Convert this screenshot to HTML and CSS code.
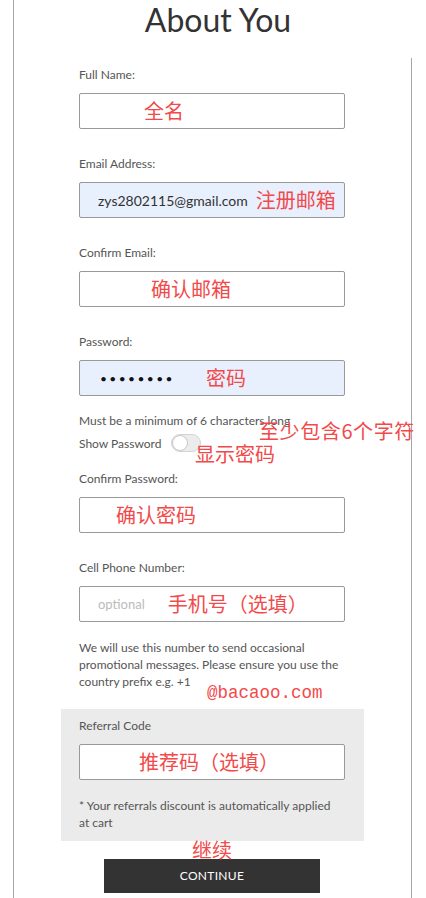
FILE: index.html
```html
<!DOCTYPE html>
<html lang="en">
<head>
    <meta charset="UTF-8">
    <meta name="viewport" content="width=device-width, initial-scale=1.0">
    <title>About You</title>
    <link rel="stylesheet" href="styles.css">
</head>
<body>
    <div class="page">
        <h1 class="title">About You</h1>

        <form class="form" id="aboutForm">
            <div class="form-group">
                <label class="label">Full Name:</label>
                <div class="field">
                    <span class="note note-name">全名</span>
                </div>
            </div>

            <div class="form-group">
                <label class="label">Email Address:</label>
                <div class="field field-filled">
                    <span class="value">zys2802115@gmail.com</span>
                    <span class="note note-email">注册邮箱</span>
                </div>
            </div>

            <div class="form-group">
                <label class="label">Confirm Email:</label>
                <div class="field">
                    <span class="note note-confirm-email">确认邮箱</span>
                </div>
            </div>

            <div class="form-group form-group-password">
                <label class="label">Password:</label>
                <div class="field field-filled">
                    <span class="value dots">&bull;&bull;&bull;&bull;&bull;&bull;&bull;&bull;</span>
                    <span class="note note-password">密码</span>
                </div>
                <div class="hint-block">
                    <p class="hint">Must be a minimum of 6 characters long</p>
                    <div class="toggle-row">
                        <span>Show Password</span>
                        <span class="toggle"><span class="knob"></span></span>
                    </div>
                    <span class="note float-note note-min">至少包含6个字符</span>
                    <span class="note float-note note-show">显示密码</span>
                </div>
            </div>

            <div class="form-group">
                <label class="label">Confirm Password:</label>
                <div class="field">
                    <span class="note note-confirm-password">确认密码</span>
                </div>
            </div>

            <div class="form-group form-group-phone">
                <label class="label">Cell Phone Number:</label>
                <div class="field">
                    <span class="placeholder">optional</span>
                    <span class="note note-phone">手机号（选填）</span>
                </div>
                <div class="phone-info">
                    <p class="hint">We will use this number to send occasional promotional messages. Please ensure you use the country prefix e.g. +1</p>
                    <span class="note float-note note-site">@bacaoo.com</span>
                </div>
            </div>

            <div class="referral">
                <label class="label">Referral Code</label>
                <div class="field">
                    <span class="note note-referral">推荐码（选填）</span>
                </div>
                <p class="hint referral-hint">* Your referrals discount is automatically applied at cart</p>
            </div>

            <div class="actions">
                <span class="note float-note note-continue">继续</span>
                <button type="submit" class="btn">CONTINUE</button>
            </div>
        </form>
    </div>
</body>
</html>
```

FILE: styles.css
```css
body {
    font-family: Lato, 'Open Sans', Arial, sans-serif;
    margin: 0;
    padding: 0;
    background-color: #fff;
    color: #555;
}

.page {
    margin-left: 13px;
    width: 398px;
    min-height: 898px;
    border-left: 1px solid #a6a6a6;
}

.title {
    margin: 0;
    padding-left: 10px;
    font-size: 32px;
    font-weight: 400;
    line-height: 40px;
    color: #333;
    text-align: center;
}

.form {
    margin-top: 18px;
    padding: 9px 66px 5px 65px;
    border-right: 1px solid #a6a6a6;
    min-height: 826px;
    box-sizing: border-box;
}

.form-group {
    margin-bottom: 27px;
}

.label {
    display: block;
    font-size: 12px;
    line-height: 16px;
    margin-bottom: 10px;
    color: #555;
}

.field {
    display: flex;
    align-items: center;
    width: 266px;
    height: 36px;
    padding-left: 18px;
    border: 1px solid #999;
    border-radius: 2px;
    background: #fff;
    box-sizing: border-box;
    white-space: nowrap;
}

.field-filled {
    background: #e8f0fe;
}

.value {
    font-size: 14px;
    color: #333;
}

.dots {
    padding-left: 2px;
    font-size: 12px;
    letter-spacing: 2.4px;
    color: #111;
}

.placeholder {
    font-size: 13px;
    color: #bbb;
}

/* red annotations */
.note {
    font-family: 'Noto Sans CJK SC', 'Liberation Sans', sans-serif;
    font-size: 20px;
    line-height: 24px;
    color: #f24a4a;
}

.float-note {
    position: absolute;
    white-space: nowrap;
}

.note-name { margin-left: 46px; }
.note-email { margin-left: 8px; }
.note-confirm-email { margin-left: 53px; }
.note-password { margin-left: 31px; }
.note-confirm-password { margin-left: 18px; }
.note-phone { margin-left: 23px; }
.note-referral { margin-left: 41px; }

.hint {
    margin: 0;
    font-size: 12px;
    line-height: 17px;
    color: #555;
}

.hint-block {
    position: relative;
    margin-top: 16px;
}

.toggle-row {
    display: flex;
    align-items: center;
    gap: 10px;
    margin-top: 5px;
    font-size: 12px;
    line-height: 17px;
}

.toggle {
    display: inline-block;
    position: relative;
    width: 28px;
    height: 16px;
    border: 1px solid #d4d4d4;
    border-radius: 9px;
    background: #ececec;
}

.toggle .knob {
    position: absolute;
    left: 0;
    top: 0;
    width: 14px;
    height: 14px;
    border: 1px solid #c8c8c8;
    border-radius: 50%;
    background: #fff;
}

.form-group-password {
    margin-bottom: 19px;
}

.note-min {
    left: 180px;
    top: 7px;
    letter-spacing: 0.6px;
}

.note-show {
    left: 116px;
    top: 30px;
}

.form-group-phone {
    margin-bottom: 19px;
}

.phone-info {
    position: relative;
    margin-top: 17px;
}

.note-site {
    left: 128px;
    top: 42px;
    font-family: 'Liberation Mono', monospace;
    font-size: 17.5px;
}

.referral {
    margin: 0 -19px 0 -18px;
    padding: 9px 19px 10px 18px;
    background: #ebebeb;
}

.referral-hint {
    max-width: 260px;
    margin-top: 17px;
}

.actions {
    position: relative;
    padding-top: 18px;
}

.note-continue {
    left: 113px;
    top: -3px;
}

.btn {
    display: block;
    width: 216px;
    height: 34px;
    margin: 0 auto;
    padding-bottom: 2px;
    border: none;
    background-color: #333;
    color: #fff;
    font-family: Lato, 'Open Sans', Arial, sans-serif;
    font-size: 12px;
    letter-spacing: 0.3px;
    cursor: pointer;
}
```
